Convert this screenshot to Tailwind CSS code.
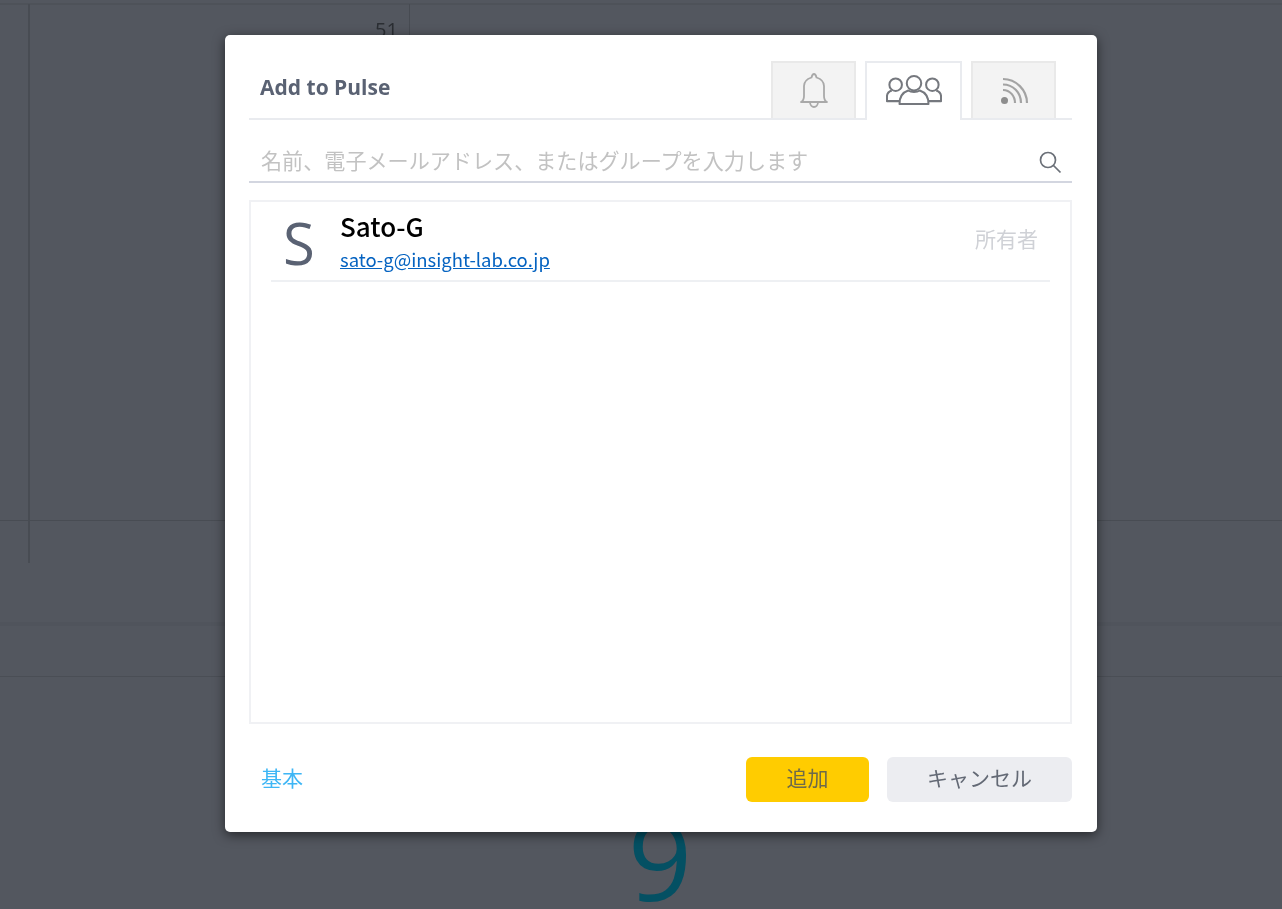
<!DOCTYPE html>
<html lang="ja">
<head>
<meta charset="utf-8">
<script src="https://cdn.jsdelivr.net/npm/@tailwindcss/browser@4"></script>
<title>Add to Pulse</title>
</head>
<body class="m-0 overflow-hidden">
<div class="relative w-[1282px] h-[909px] bg-[#53575f] overflow-hidden font-['Noto_Sans_CJK_JP','Noto_Sans',sans-serif]">
  <!-- dimmed page behind the dialog -->
  <div class="absolute inset-0 blur-[0.6px]">
    <div class="absolute left-0 top-[3px] w-full h-[2px] bg-[#4e5259]"></div>
    <div class="absolute left-[28px] top-[4px] w-[2px] h-[559px] bg-[#484c53]"></div>
    <div class="absolute left-[409px] top-[4px] w-px h-[40px] bg-[#474b52]"></div>
    <div class="absolute left-0 top-[520px] w-full h-px bg-[#484c53]"></div>
    <div class="absolute left-0 top-[622px] w-full h-[4px] bg-[#50545c]"></div>
    <div class="absolute left-0 top-[676px] w-full h-px bg-[#4a4e55]"></div>
    <div class="absolute left-[375px] top-[17px] text-[20px] leading-[26px] text-[#2b2e33] font-['Open_Sans']">51</div>
    <div class="absolute left-[628px] top-[782px] text-[112px] leading-[152px] text-[#045063] font-['Open_Sans']">9</div>
  </div>

  <!-- dialog -->
  <div class="absolute left-[225px] top-[35px] w-[872px] h-[797px] bg-white rounded-[5px] shadow-[0_3px_12px_rgba(0,0,0,0.55)] pl-6 pr-[25px] flex flex-col">
    <div class="h-[85px] shrink-0 border-b-2 border-[#e9ebef] flex items-end justify-between pl-[11px] pr-4">
      <div class="pb-[16px] text-[21px] leading-[30px] font-bold text-[#5a6273] font-['Open_Sans']">Add to Pulse</div>
      <div class="flex gap-[9px] -mb-[2px]">
        <div class="w-[85px] h-[57px] mb-[2px] bg-[#f3f3f3] border-2 border-b-0 border-[#e9e9e9] flex items-center justify-center">
          <svg width="30" height="36" viewBox="0 0 30 36" fill="none" stroke="#a9a9a9" stroke-width="1.8" stroke-linejoin="round"><path d="M2 29c2-1 3-3 3-6V13c0-4 3-7 7.500-8.500C13 2.500 14 1 15 1s2 1.500 2.500 3.500C22 6 25 9 25 13v10c0 3 1 5 3 6z"/><path d="M11 29c0 3 2 5 4 5s4-2 4-5"/></svg>
        </div>
        <div class="w-[97px] h-[59px] bg-white border-2 border-b-0 border-[#e9ebef] flex items-center justify-center">
          <svg class="mb-[3px]" width="56" height="31" viewBox="0 0 58 32" fill="none" stroke="#75787e" stroke-width="2.100" stroke-linejoin="round"><circle cx="10" cy="10" r="6.500"/><circle cx="48" cy="10" r="6.500"/><path d="M6 16c-3 1-5 3-5 6v5h14M52 16c3 1 5 3 5 6v5H43"/><circle cx="29" cy="8.500" r="7.500"/><path d="M23 16c-6 2-9 6-9 14h30c0-8-3-12-9-14-3 2-9 2-12 0z" fill="#fff"/></svg>
        </div>
        <div class="w-[85px] h-[57px] mb-[2px] bg-[#f3f3f3] border-2 border-b-0 border-[#e9e9e9] flex items-center justify-center">
          <svg width="30" height="30" viewBox="0 0 30 30" fill="none" stroke="#a3a3a3" stroke-width="2.200"><circle cx="5.500" cy="24.500" r="3.500" fill="#8d8d8d" stroke="none"/><path d="M4 14c7 0 12 6 12 13M4 8.500c10 0 18 8 18 18.500M4 3c13 0 24 11 24 24"/></svg>
        </div>
      </div>
    </div>

    <div class="h-[63px] shrink-0 border-b-2 border-[#d3d6e0] flex items-center justify-between pl-3 pr-2.5 pt-[18px]">
      <span class="text-[21.1px] leading-[30px] text-[#c2c2c2]">名前、電子メールアドレス、またはグループを入力します</span>
      <svg class="mt-[4px]" width="24" height="24" viewBox="0 0 24 24" fill="none" stroke="#6b7078" stroke-width="1.700"><circle cx="10" cy="10" r="7.500"/><path d="M15.500 15.500 22.500 22.500"/></svg>
    </div>

    <div class="mt-[17px] h-[524px] shrink-0 border-2 border-[#f0f1f4] px-5">
      <div class="h-[80px] border-b-2 border-[#eef0f3] flex items-center">
        <div class="w-[69px] pl-[12px] pt-[4px] text-[58px] leading-[78px] text-[#5a6273] font-['Open_Sans']">S</div>
        <div class="flex-1 flex flex-col">
          <span class="text-[26px] leading-[32px] font-medium text-black">Sato-G</span>
          <a href="#" class="text-[18.500px] leading-[26px] mt-[4px] text-[#0563c1] underline">sato-g@insight-lab.co.jp</a>
        </div>
        <span class="text-[21px] leading-[30px] text-[#cfd1d6] pr-3 pb-[6px]">所有者</span>
      </div>
    </div>

    <div class="mt-[33px] flex items-start pl-3">
      <a href="#" class="h-[45px] text-[21px] leading-[40px] text-[#3eb6f5]">基本</a>
      <div class="ml-auto flex gap-[18px]">
        <button class="w-[123px] h-[45px] pb-[4px] rounded-[6px] bg-[#ffcc00] text-[21px] text-[#6e6a4a]">追加</button>
        <button class="w-[185px] h-[45px] pb-[4px] rounded-[6px] bg-[#ecedf1] text-[21px] text-[#636975]">キャンセル</button>
      </div>
    </div>
  </div>
</div>
</body>
</html>
